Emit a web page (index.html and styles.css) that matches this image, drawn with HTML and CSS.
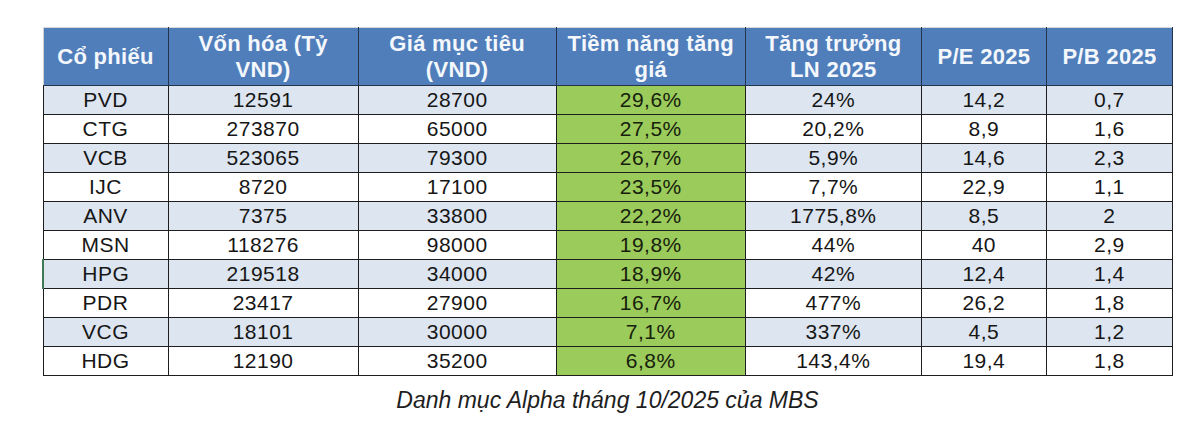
FILE: index.html
```html
<!DOCTYPE html>
<html lang="vi">
<head>
<meta charset="utf-8">
<title>Danh mục Alpha tháng 10/2025 của MBS</title>
<link rel="stylesheet" href="styles.css">
</head>
<body>
<div class="sheet">
  <table class="alpha">
    <colgroup>
      <col class="c1"><col class="c2"><col class="c3"><col class="c4"><col class="c5"><col class="c6"><col class="c7">
    </colgroup>
    <thead>
      <tr>
        <th>Cổ phiếu</th>
        <th>Vốn hóa (Tỷ<br>VND)</th>
        <th>Giá mục tiêu<br>(VND)</th>
        <th>Tiềm năng tăng<br>giá</th>
        <th>Tăng trưởng<br>LN 2025</th>
        <th>P/E 2025</th>
        <th>P/B 2025</th>
      </tr>
    </thead>
    <tbody>
      <tr class="alt"><td>PVD</td><td>12591</td><td>28700</td><td class="up">29,6%</td><td>24%</td><td>14,2</td><td>0,7</td></tr>
      <tr><td>CTG</td><td>273870</td><td>65000</td><td class="up">27,5%</td><td>20,2%</td><td>8,9</td><td>1,6</td></tr>
      <tr class="alt"><td>VCB</td><td>523065</td><td>79300</td><td class="up">26,7%</td><td>5,9%</td><td>14,6</td><td>2,3</td></tr>
      <tr><td>IJC</td><td>8720</td><td>17100</td><td class="up">23,5%</td><td>7,7%</td><td>22,9</td><td>1,1</td></tr>
      <tr class="alt"><td>ANV</td><td>7375</td><td>33800</td><td class="up">22,2%</td><td>1775,8%</td><td>8,5</td><td>2</td></tr>
      <tr><td>MSN</td><td>118276</td><td>98000</td><td class="up">19,8%</td><td>44%</td><td>40</td><td>2,9</td></tr>
      <tr class="alt sel"><td>HPG</td><td>219518</td><td>34000</td><td class="up">18,9%</td><td>42%</td><td>12,4</td><td>1,4</td></tr>
      <tr><td>PDR</td><td>23417</td><td>27900</td><td class="up">16,7%</td><td>477%</td><td>26,2</td><td>1,8</td></tr>
      <tr class="alt"><td>VCG</td><td>18101</td><td>30000</td><td class="up">7,1%</td><td>337%</td><td>4,5</td><td>1,2</td></tr>
      <tr><td>HDG</td><td>12190</td><td>35200</td><td class="up">6,8%</td><td>143,4%</td><td>19,4</td><td>1,8</td></tr>
    </tbody>
  </table>
  <p class="caption">Danh mục Alpha tháng 10/2025 của MBS</p>
</div>
</body>
</html>
```
FILE: styles.css
```css
html, body {
  margin: 0;
  padding: 0;
  background: #ffffff;
}

body {
  font-family: "Liberation Sans", Arial, sans-serif;
  color: #1c1c1c;
}

.sheet {
  padding: 27px 0 0 42px;
  width: 1131px;
}

.alpha {
  border-collapse: collapse;
  table-layout: fixed;
  width: 1131px;
  border-top: 1px solid #d8d8d8;
  border-left: 1px solid #d0d0d0;
}

.c1 { width: 125px; }
.c2 { width: 190px; }
.c3 { width: 198px; }
.c4 { width: 189px; }
.c5 { width: 176px; }
.c6 { width: 125px; }
.c7 { width: 126px; }

.alpha th {
  background: #4f7ebb;
  color: #f4f7fb;
  font-weight: bold;
  font-size: 22px;
  line-height: 26px;
  height: 57px;
  padding: 0 4px;
  text-align: center;
  vertical-align: middle;
  border: 1px solid #26334a;
  border-top: none;
  letter-spacing: 0.3px;
}

.alpha th:first-child {
  border-left: none;
}

.alpha td {
  height: 28px;
  padding: 0;
  font-size: 21px;
  line-height: 28px;
  text-align: center;
  vertical-align: middle;
  border: 1px solid #1e1e1e;
  letter-spacing: 0.5px;
  background: #ffffff;
  color: #161616;
}

.alpha tr.alt td {
  background: #dce5f0;
}

.alpha td.up,
.alpha tr.alt td.up {
  background: #9bcb5a;
  color: #16200d;
}

.alpha tr.sel td:first-child {
  border-left: 2px solid #3f7a55;
}

.caption {
  margin: 11px 0 0 0;
  text-align: center;
  font-style: italic;
  font-size: 23px;
  line-height: 26px;
  color: #1e1e1e;
}
```
